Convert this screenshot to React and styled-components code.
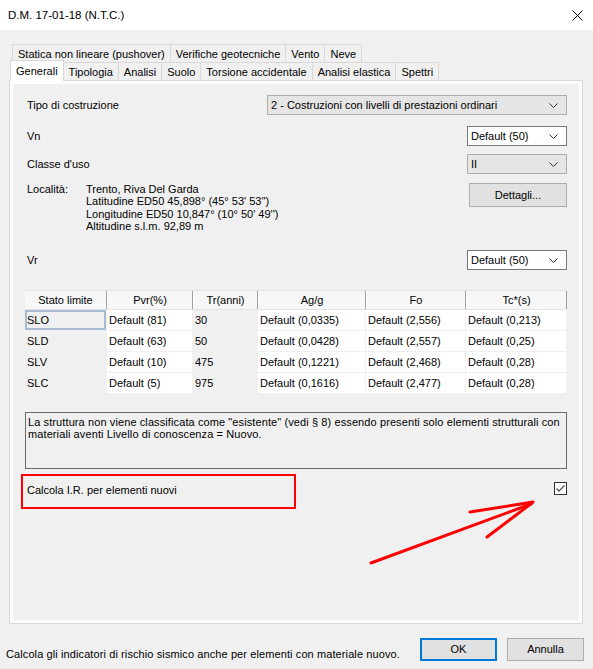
import styled, { createGlobalStyle } from "styled-components";

const GlobalStyle = createGlobalStyle`
  html, body {
    margin: 0;
    padding: 0;
    background: #f0f0f0;
  }
  body {
    font-family: "Liberation Sans", Arial, sans-serif;
    font-size: 11px;
    color: #000;
  }
`;

const backTabs = ["Statica non lineare (pushover)", "Verifiche geotecniche", "Vento", "Neve"];
const frontTabs = ["Generali", "Tipologia", "Analisi", "Suolo", "Torsione accidentale", "Analisi elastica", "Spettri"];

const columns = [
    { title: "Stato limite", width: 82 },
    { title: "Pvr(%)", width: 86 },
    { title: "Tr(anni)", width: 65 },
    { title: "Ag/g", width: 108 },
    { title: "Fo", width: 100 },
    { title: "Tc*(s)", width: 101 },
];

// grey cells are read-only
const greyCols = [0, 2];

const rows = [
    ["SLO", "Default (81)", "30", "Default (0,0335)", "Default (2,556)", "Default (0,213)"],
    ["SLD", "Default (63)", "50", "Default (0,0428)", "Default (2,557)", "Default (0,25)"],
    ["SLV", "Default (10)", "475", "Default (0,1221)", "Default (2,468)", "Default (0,28)"],
    ["SLC", "Default (5)", "975", "Default (0,1616)", "Default (2,477)", "Default (0,28)"],
];

const Chevron = () => (
    <svg width="9" height="5" viewBox="0 0 9 5">
        <polyline points="0.5,0.5 4.5,4.5 8.5,0.5" fill="none" stroke="#333" strokeWidth="1" />
    </svg>
);

const Combo = ({ value, width, editable }) => (
    <Select $width={width} $editable={editable}>
        <span>{value}</span>
        <Chevron />
    </Select>
);

const App = () => {
    return (
        <>
            <GlobalStyle />
            <Window>
                <TitleBar>
                    <span>D.M. 17-01-18 (N.T.C.)</span>
                    <svg width="11" height="11" viewBox="0 0 11 11">
                        <path d="M0.5 0.5 L10.5 10.5 M10.5 0.5 L0.5 10.5" stroke="#000" strokeWidth="1" />
                    </svg>
                </TitleBar>

                <Body>
                    <TabRow $indent={3}>
                        {backTabs.map(t => <Tab key={t}>{t}</Tab>)}
                    </TabRow>
                    <TabRow $indent={3}>
                        {frontTabs.map((t, i) => <Tab key={t} $active={i === 0}>{t}</Tab>)}
                    </TabRow>

                    <Panel>
                        <Page>
                            <FieldRow $top={11}>
                                <Label>Tipo di costruzione</Label>
                                <Combo value="2 - Costruzioni con livelli di prestazioni ordinari" width={300} />
                            </FieldRow>
                            <FieldRow $top={11}>
                                <Label>Vn</Label>
                                <Combo value="Default (50)" width={100} editable />
                            </FieldRow>
                            <FieldRow $top={8}>
                                <Label>Classe d'uso</Label>
                                <Combo value="II" width={100} />
                            </FieldRow>

                            <PlaceRow>
                                <PlaceLabel>Località:</PlaceLabel>
                                <PlaceInfo>
                                    <div>Trento, Riva Del Garda</div>
                                    <div>Latitudine ED50 45,898° (45° 53' 53'')</div>
                                    <div>Longitudine ED50 10,847° (10° 50' 49'')</div>
                                    <div>Altitudine s.l.m. 92,89 m</div>
                                </PlaceInfo>
                                <Button $width={98} $height={24}>Dettagli...</Button>
                            </PlaceRow>

                            <FieldRow $top={18}>
                                <Label>Vr</Label>
                                <Combo value="Default (50)" width={100} editable />
                            </FieldRow>

                            <Grid>
                                <HeaderRow>
                                    {columns.map(c => (
                                        <HeaderCell key={c.title} style={{ width: c.width }}>{c.title}</HeaderCell>
                                    ))}
                                </HeaderRow>
                                {rows.map((r, ri) => (
                                    <DataRow key={r[0]}>
                                        {r.map((v, ci) => (
                                            <Cell
                                                key={ci}
                                                style={{ width: columns[ci].width - 1 }}
                                                $grey={greyCols.includes(ci)}
                                                $focus={ri === 0 && ci === 0}
                                            >
                                                {v}
                                            </Cell>
                                        ))}
                                    </DataRow>
                                ))}
                            </Grid>

                            <Message>
                                La struttura non viene classificata come "esistente" (vedi § 8) essendo presenti solo elementi strutturali con materiali aventi Livello di conoscenza = Nuovo.
                            </Message>

                            <CheckRow>
                                <Highlight>Calcola I.R. per elementi nuovi</Highlight>
                                <CheckBox>
                                    <svg width="11" height="11" viewBox="0 0 11 11">
                                        <polyline points="1.5,5.5 4,8 9.5,2.5" fill="none" stroke="#555" strokeWidth="1.3" />
                                    </svg>
                                </CheckBox>
                            </CheckRow>

                            <Arrow width="175" height="73" viewBox="0 0 175 73">
                                <g fill="none" stroke="#ff0000" strokeWidth="3" strokeLinecap="round">
                                    <path d="M6 67 L166 8" />
                                    <path d="M105 16 L168 6" />
                                    <path d="M122 41 L167 7" />
                                </g>
                            </Arrow>
                        </Page>
                    </Panel>
                </Body>

                <Footer>
                    <Hint>Calcola gli indicatori di rischio sismico anche per elementi con materiale nuovo.</Hint>
                    <Buttons>
                        <Button $width={77} $height={23} $default>OK</Button>
                        <Button $width={77} $height={23}>Annulla</Button>
                    </Buttons>
                </Footer>
            </Window>
        </>
    );
};

const Window = styled.div`
    width: 593px;
    height: 669px;
    display: flex;
    flex-direction: column;
    background: #f0f0f0;
    overflow: hidden;
`;

const TitleBar = styled.div`
    height: 30px;
    flex-shrink: 0;
    background: #fff;
    display: flex;
    align-items: center;
    justify-content: space-between;
    padding: 0 10px 0 8px;
    font-size: 11.5px;
`;

const Body = styled.div`
    flex: 1;
    display: flex;
    flex-direction: column;
    padding: 14px 10px 0 9px;
    min-height: 0;
`;

const TabRow = styled.div`
    display: flex;
    height: 18px;
    padding-left: ${p => p.$indent}px;
`;

const Tab = styled.div`
    position: relative;
    display: flex;
    align-items: center;
    padding: 0 5px;
    margin-right: -1px;
    border: 1px solid #d9d9d9;
    border-bottom: none;
    background: ${p => (p.$active ? "#fff" : "#f0f0f0")};
    white-space: nowrap;
    ${p => p.$active && `
        margin: -2px -1px -1px -2px;
        padding: 0 5px 1px 5px;
        z-index: 2;
    `}
`;

const Panel = styled.div`
    flex: 1;
    display: flex;
    border: 1px solid #d9d9d9;
    background: #fff;
    padding: 3px;
    min-height: 0;
`;

const Page = styled.div`
    position: relative;
    flex: 1;
    display: flex;
    flex-direction: column;
    background: #f0f0f0;
    padding: 0 12px;
`;

const FieldRow = styled.div`
    display: flex;
    align-items: center;
    justify-content: space-between;
    height: 20px;
    margin-top: ${p => p.$top}px;
`;

const Label = styled.span`
    padding-left: 2px;
`;

const Select = styled.div`
    box-sizing: border-box;
    width: ${p => p.$width}px;
    height: 20px;
    display: flex;
    align-items: center;
    justify-content: space-between;
    padding: 0 8px 0 3px;
    background: ${p => (p.$editable ? "#fff" : "#e5e5e5")};
    border: 1px solid ${p => (p.$editable ? "#7a7a7a" : "#adadad")};
    white-space: nowrap;
`;

const PlaceRow = styled.div`
    display: flex;
    align-items: flex-start;
    margin-top: 9px;
`;

const PlaceLabel = styled.span`
    width: 59px;
    padding-left: 2px;
    line-height: 12.3px;
`;

const PlaceInfo = styled.div`
    flex: 1;
    line-height: 12.3px;
`;

const Button = styled.div`
    box-sizing: border-box;
    width: ${p => p.$width}px;
    height: ${p => p.$height}px;
    display: flex;
    align-items: center;
    justify-content: center;
    background: #e1e1e1;
    border: ${p => (p.$default ? "2px solid #0078d7" : "1px solid #adadad")};
`;

const Grid = styled.div`
    margin-top: 20px;
    display: flex;
    flex-direction: column;
    row-gap: 1px;
`;

const HeaderRow = styled.div`
    display: flex;
    height: 18px;
    background: #f7f7f7;
    border-top: 1px solid #e3e3e3;
    border-bottom: 1px solid #e3e3e3;
    margin-bottom: -1px;
`;

const HeaderCell = styled.div`
    box-sizing: border-box;
    display: flex;
    align-items: center;
    justify-content: center;
    border-right: 1px solid #a0a0a0;
    border-left: 1px solid #fff;
    &:first-child { border-left: none; }
`;

const DataRow = styled.div`
    display: flex;
    column-gap: 1px;
    height: 20px;
`;

const Cell = styled.div`
    box-sizing: border-box;
    display: flex;
    align-items: center;
    background: ${p => (p.$grey ? "#f0f0f0" : "#fff")};
    border: ${p => (p.$focus ? "2px solid #a7bcd3" : "none")};
    padding-left: ${p => (p.$focus ? 0 : 2)}px;
    white-space: nowrap;
`;

const Message = styled.div`
    box-sizing: border-box;
    margin-top: 19px;
    height: 57px;
    border: 1px solid #6a6a6a;
    padding: 3px 2px;
    line-height: 12px;
    letter-spacing: 0.1px;
`;

const CheckRow = styled.div`
    display: flex;
    justify-content: space-between;
    align-items: flex-start;
    margin-top: 5px;
`;

const Highlight = styled.div`
    box-sizing: border-box;
    width: 275px;
    height: 35px;
    margin-left: -4px;
    border: 2px solid #ff0000;
    padding: 0 0 3px 4px;
    display: flex;
    align-items: center;
`;

const CheckBox = styled.div`
    box-sizing: border-box;
    width: 13px;
    height: 13px;
    margin-top: 8px;
    border: 1px solid #333;
    background: #fff;
    display: flex;
    align-items: center;
    justify-content: center;
`;

const Arrow = styled.svg`
    position: absolute;
    left: 352px;
    top: 412px;
`;

const Footer = styled.div`
    height: 45px;
    flex-shrink: 0;
    display: flex;
    align-items: center;
    justify-content: space-between;
    padding: 0 9px 0 6px;
`;

const Hint = styled.span`
    margin-top: 14px;
    letter-spacing: 0.1px;
`;

const Buttons = styled.div`
    display: flex;
    gap: 10px;
    margin-top: 5px;
`;

export default App;
